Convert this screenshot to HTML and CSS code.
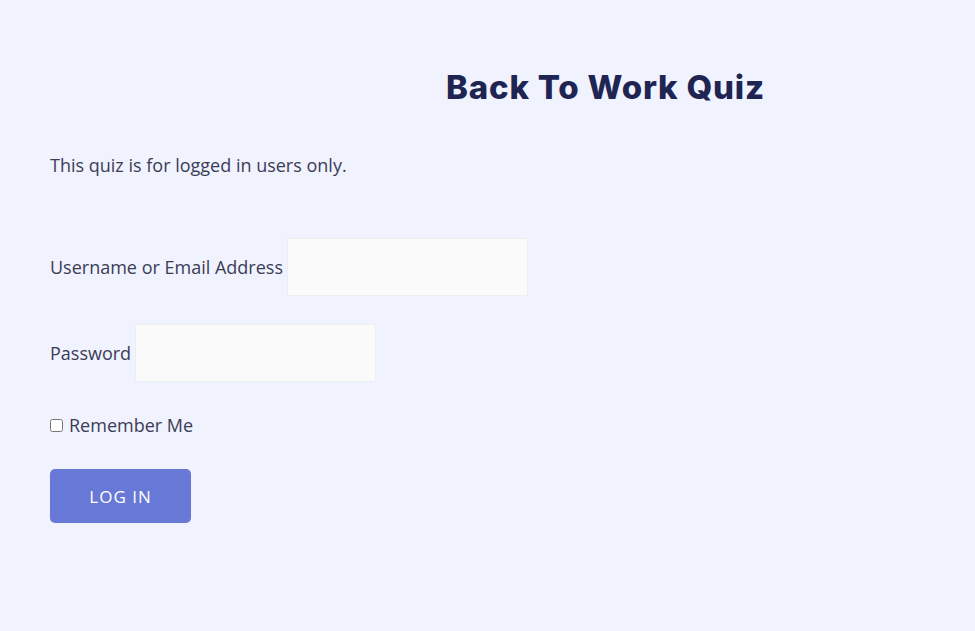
FILE: index.html
```html
<!DOCTYPE html>
<html>
<head>
<meta charset="utf-8">
<link rel="stylesheet" href="styles.css">
</head>
<body>
<main class="page">
  <h1 class="title">Back To Work Quiz</h1>
  <p class="notice">This quiz is for logged in users only.</p>
  <form class="login">
    <div class="row">
      <label class="label" for="user">Username or Email Address</label>
      <input class="field" id="user" type="text">
    </div>
    <div class="row row-pass">
      <label class="label" for="pass">Password</label>
      <input class="field" id="pass" type="password">
    </div>
    <div class="remember">
      <input class="check" id="rem" type="checkbox">
      <label class="label" for="rem">Remember Me</label>
    </div>
    <button class="btn" type="button">LOG IN</button>
  </form>
</main>
</body>
</html>
```
FILE: styles.css
```css
html, body {
  margin: 0;
  padding: 0;
  background: #f0f2fe;
}
body {
  font-family: "Open Sans", "Liberation Sans", sans-serif;
  color: #3b3c56;
  font-size: 18px;
}
.page {
  padding: 64px 50px 0 50px;
}
.title {
  margin: 0 0 0 396px;
  font-family: "Inter", "Liberation Sans", sans-serif;
  font-weight: 800;
  font-size: 33px;
  line-height: 46px;
  color: #1f2553;
  letter-spacing: 0.8px;
}
.notice {
  margin: 41px 0 0 0;
  line-height: 28px;
}
.login {
  margin-top: 59px;
}
.row {
  display: flex;
  align-items: center;
  gap: 4px;
}
.row-pass {
  margin-top: 28px;
}
.field {
  width: 241px;
  height: 58px;
  box-sizing: border-box;
  background: #fafafa;
  border: 1px solid #eceef6;
  border-radius: 0;
  margin: 0;
  outline: none;
}
.remember {
  margin-top: 29px;
  display: flex;
  align-items: center;
  gap: 6px;
  line-height: 28px;
}
.check {
  margin: 0;
  width: 13px;
  height: 13px;
}
.btn {
  margin-top: 30px;
  width: 141px;
  height: 54px;
  border: none;
  border-radius: 5px;
  background: #6878d6;
  color: #ffffff;
  font-family: "Open Sans", "Liberation Sans", sans-serif;
  font-size: 17px;
  letter-spacing: 1px;
  cursor: pointer;
}
```
